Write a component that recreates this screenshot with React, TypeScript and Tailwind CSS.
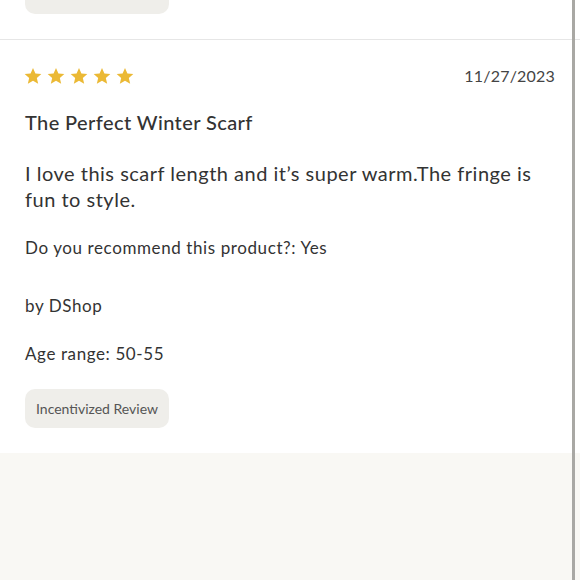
const StarIcon = () => (
  <svg viewBox="0 0 24 24" className="h-[20px] w-[20px]" fill="#ebb935">
    <path d="M12 2.5l2.9 6.6 7.1.6-5.4 4.7 1.6 7-6.2-3.7-6.2 3.7 1.6-7L2 9.7l7.1-.6z" />
  </svg>
);

export default function App() {
  return (
    <div
      className="relative h-[580px] w-[580px] overflow-hidden bg-[#f9f8f4] text-[#333333]"
      style={{ fontFamily: "Lato, 'Noto Sans', sans-serif" }}
    >
      {/* previous review tail */}
      <div className="bg-white px-[25px] pb-[25px]">
        <div className="-mt-[25px] h-[39px] w-[144px] rounded-[10px] bg-[#efeeea]" />
      </div>

      {/* review */}
      <div className="border-t border-[#e6e6e6] bg-white px-[25px] pt-[24px] pb-[25px]">
        <div className="flex items-start justify-between">
          <div className="-ml-[2px] flex gap-[3px] pt-[2px]">
            {[0, 1, 2, 3, 4].map((i) => (
              <StarIcon key={i} />
            ))}
          </div>
          <span className="text-[16px] tracking-[0.2px] text-[#444]">11/27/2023</span>
        </div>

        <h3 className="mt-[19px] text-[20px] font-medium tracking-[0.4px]">The Perfect Winter Scarf</h3>

        <p className="mt-[23px] text-[20px] leading-[26px] tracking-[0.5px]">
          I love this scarf length and it’s super warm.The fringe is fun to style.
        </p>

        <p className="mt-[23px] text-[17px] tracking-[0.6px]">Do you recommend this product?: Yes</p>

        <p className="mt-[32px] text-[17px] tracking-[0.6px]">by DShop</p>

        <p className="mt-[23px] text-[17px] tracking-[0.6px]">Age range: 50-55</p>

        <div className="mt-[22px] flex h-[39px] w-[144px] items-center justify-center rounded-[10px] bg-[#efeeea] text-[14px] text-[#555]">
          Incentivized Review
        </div>
      </div>

      {/* scrollbar */}
      <div className="absolute top-0 right-[5px] h-full w-[3px] bg-[#a9a8a4]" />
    </div>
  );
}
